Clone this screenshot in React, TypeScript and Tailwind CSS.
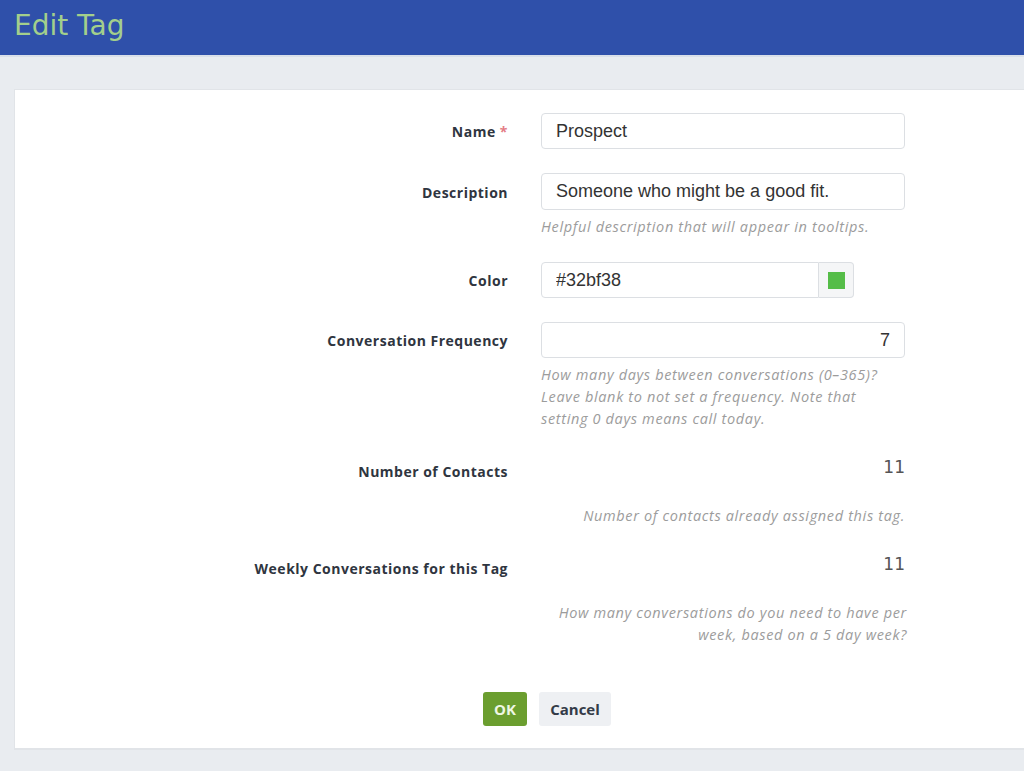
import React from "react";

const labelCls =
  "w-[493px] shrink-0 text-right text-[14px] tracking-[0.5px] font-bold text-[#2f3540] [font-family:'Open_Sans',sans-serif]";
const helpCls =
  "text-[14.5px] tracking-[0.65px] italic leading-[22px] text-[#9c9c9c] [font-family:'Open_Sans',sans-serif]";
const inputCls =
  "h-[36px] w-full rounded-[4px] border border-[#dcdfe3] bg-white px-[14px] text-[18px] text-[#333] outline-none [font-family:'Liberation_Sans',Arial,sans-serif]";

export default function App() {
  return (
    <div className="min-h-[771px] w-full bg-[#e9ecf0]">
      <header className="flex h-[57px] items-center bg-[#2f50aa] pl-[14px] border-b-2 border-[#d9dfe9]">
        <h1 className="text-[28px] leading-none text-[#a3cf8c] [font-family:'DejaVu_Sans',sans-serif] -mt-[3px]">
          Edit Tag
        </h1>
      </header>
      <div className="pt-[32px]">
        <div className="ml-[14px] border-t border-l border-b-2 border-[#e1e4e8] bg-white pt-[23px] pb-[22px]">
          {/* Name */}
          <div className="flex items-center">
            <div className={labelCls}>
              Name <span className="text-[#e47c86]">*</span>
            </div>
            <div className="ml-[33px] w-[364px]">
              <input className={inputCls} defaultValue="Prospect" />
            </div>
          </div>

          {/* Description */}
          <div className="mt-[24px] flex items-start">
            <div className={labelCls + " pt-[9px]"}>Description</div>
            <div className="ml-[33px] w-[364px]">
              <input
                className={inputCls + " h-[37px]"}
                defaultValue="Someone who might be a good fit."
              />
              <div className={helpCls + " mt-[6px]"}>
                Helpful description that will appear in tooltips.
              </div>
            </div>
          </div>

          {/* Color */}
          <div className="mt-[24px] flex items-center">
            <div className={labelCls}>Color</div>
            <div className="ml-[33px] flex w-[313px]">
              <input
                className={inputCls + " rounded-r-none"}
                defaultValue="#32bf38"
              />
              <div className="flex h-[36px] w-[35px] shrink-0 items-center justify-center rounded-r-[4px] border border-l-0 border-[#dcdfe3] bg-[#f5f6f7]">
                <div className="h-[17px] w-[17px] bg-[#55bd48]" />
              </div>
            </div>
          </div>

          {/* Conversation Frequency */}
          <div className="mt-[24px] flex items-start">
            <div className={labelCls + " pt-[8px]"}>Conversation Frequency</div>
            <div className="ml-[33px] w-[364px]">
              <input className={inputCls + " text-right"} defaultValue="7" />
              <div className={helpCls + " mt-[6px]"}>
                How many days between conversations (0–365)?
                <br />
                Leave blank to not set a frequency. Note that
                <br />
                setting 0 days means call today.
              </div>
            </div>
          </div>

          {/* Number of Contacts */}
          <div className="mt-[24px] flex items-start">
            <div className={labelCls + " pt-[7px]"}>Number of Contacts</div>
            <div className="ml-[33px] w-[364px]">
              <div className="h-[36px] pt-[1px] text-right text-[17px] text-[#555] [font-family:'DejaVu_Sans',sans-serif]">
                11
              </div>
              <div className={helpCls + " mt-[15px] text-right"}>
                Number of contacts already assigned this tag.
              </div>
            </div>
          </div>

          {/* Weekly Conversations */}
          <div className="mt-[24px] flex items-start">
            <div className={labelCls + " pt-[7px]"}>
              Weekly Conversations for this Tag
            </div>
            <div className="ml-[33px] w-[366px]">
              <div className="h-[36px] pt-[1px] pr-[2px] text-right text-[17px] text-[#555] [font-family:'DejaVu_Sans',sans-serif]">
                11
              </div>
              <div className={helpCls + " mt-[15px] text-right"}>
                How many conversations do you need to have per
                <br />
                week, based on a 5 day week?
              </div>
            </div>
          </div>

          {/* Buttons */}
          <div className="mt-[46px] flex gap-[12px] pl-[468px]">
            <button className="h-[34px] w-[44px] rounded-[3px] bg-[#6b9e2f] text-[15px] font-bold text-[#eef7e4] [font-family:'Open_Sans',sans-serif]">
              OK
            </button>
            <button className="h-[34px] w-[72px] rounded-[3px] bg-[#eef0f3] text-[15px] font-bold text-[#333b47] [font-family:'Open_Sans',sans-serif]">
              Cancel
            </button>
          </div>
        </div>
      </div>
    </div>
  );
}
